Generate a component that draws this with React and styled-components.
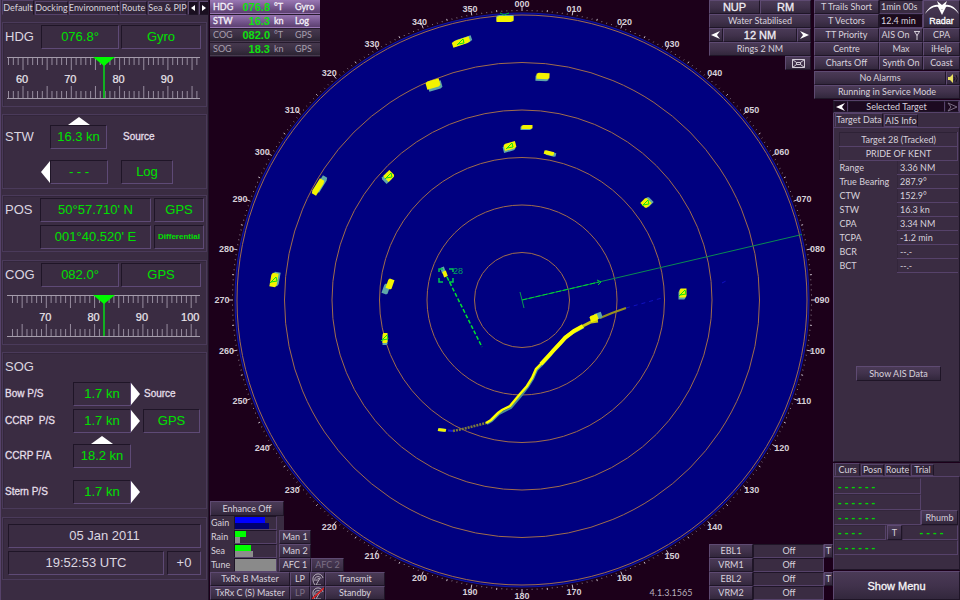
import React from "react";
import styled, { createGlobalStyle, css } from "styled-components";

const C = {
  panel: "#3a2c42",
  edge: "#56426a",
  dark: "#1f1527",
  night: "#1c001a",
  text: "#d8d2dc",
  green: "#00e000",
};

const SMALL = 'Lato, "Liberation Sans", sans-serif';

const Global = createGlobalStyle`
  *, *::before, *::after { box-sizing: border-box; }
  body { margin: 0; background: ${C.night}; color: ${C.text}; font: 10px/12px "Liberation Sans", sans-serif; }
  button { font: inherit; color: inherit; margin: 0; padding: 0; border-radius: 0; cursor: pointer; }
  h2 { margin: 0; font: inherit; }
`;

const Page = styled.div`
  display: grid;
  grid-template-columns: 209px minmax(0, 1fr);
  min-height: 100vh;
`;

/* ---------- shared parts ---------- */

const raised = css`
  border: 1px solid;
  border-color: #5e4a72 ${C.dark} ${C.dark} #5e4a72;
  background: linear-gradient(#4a3a56, #41324c 50%, #32273c);
`;

const Key = styled.button`
  ${raised}
  display: flex;
  align-items: center;
  justify-content: center;
  height: ${(p) => p.$h || "14px"};
  width: ${(p) => p.$w || "auto"};
  flex: ${(p) => (p.$grow ? "1 1 0" : "none")};
  font-family: ${SMALL};
  font-size: 9px;
  line-height: 12px;
  white-space: nowrap;
  color: ${(p) => (p.$dim ? "#7b6f84" : C.text)};
  align-self: ${(p) => p.$self || "auto"};
`;

const BigKey = styled(Key)`
  font-family: "Liberation Sans", sans-serif;
  font-size: 11px;
  color: #f2eef4;
  -webkit-text-stroke: 0.3px #f2eef4;
`;

const Line = styled.div`
  display: flex;
  align-items: center;
  gap: ${(p) => p.$gap || "0"};
  padding: ${(p) => p.$pad || "0"};
`;

const TabBar = styled.div`
  display: flex;
  align-items: flex-end;
  height: ${(p) => p.$h || "15px"};
  gap: 1px;
  padding-left: 1px;
  overflow: hidden;
`;

const Tab = styled.button`
  display: flex;
  align-items: center;
  justify-content: center;
  height: ${(p) => (p.$active ? "100%" : "calc(100% - 1px)")};
  width: ${(p) => p.$w};
  flex: none;
  white-space: nowrap;
  font-family: ${SMALL};
  font-size: 9px;
  line-height: 12px;
  color: ${C.text};
  background: ${(p) => (p.$active ? C.panel : "#33263b")};
  border: 1px solid;
  border-color: ${C.edge} ${C.dark} ${(p) => (p.$active ? C.panel : C.edge)} ${C.edge};
`;

/* ---------- left column ---------- */

const Left = styled.aside`
  background: ${C.panel};
  border-right: 1px solid ${C.dark};
  border-left: 1px solid ${C.edge};
  display: flex;
  flex-direction: column;
`;

const Scroll = styled(Key)`
  background: #1a0f20;
`;

const Group = styled.section`
  border: 1px solid;
  border-color: #4a3a5a;
  box-shadow: inset 1px 1px 0 #33263b;
  margin: ${(p) => p.$mt || "7px"} 1px 0 1px;
  height: ${(p) => p.$h};
  padding: ${(p) => p.$pad || "2px 1px 0 2px"};
`;

const Caption = styled.h2`
  flex: none;
  width: ${(p) => p.$w || "36px"};
  font-size: 13px;
  line-height: 24px;
  color: #dcd6e0;
`;

const Note = styled.span`
  width: ${(p) => p.$w || "auto"};
  font-size: 10px;
  white-space: pre;
  color: #e4dfe8;
  -webkit-text-stroke: 0.3px #e4dfe8;
`;

const Readout = styled.output`
  display: flex;
  align-items: center;
  justify-content: center;
  height: 24px;
  width: ${(p) => p.$w};
  flex: ${(p) => (p.$grow ? "1 1 0" : "none")};
  border: 1px solid;
  border-color: ${C.dark} #5e4a76 #5e4a76 ${C.dark};
  font-size: ${(p) => (p.$small ? "8px" : "13px")};
  font-weight: ${(p) => (p.$small ? "bold" : "normal")};
  color: ${(p) => (p.$plain ? "#dcd6e0" : C.green)};
  white-space: pre;
`;

const Stack = styled.div`
  display: flex;
  flex-direction: column;
  gap: ${(p) => p.$gap || "0"};
  padding: ${(p) => p.$pad || "0"};
`;

const Spacer = styled.div`
  flex: none;
  width: ${(p) => p.$w || "auto"};
  height: ${(p) => p.$h || "auto"};
`;

const Icon = styled.svg`
  display: block;
  flex: none;
`;

const Up = () => (
  <Icon width="22" height="8" viewBox="0 0 22 8"><path d="M0 8L11 0L22 8Z" fill="#fff" /></Icon>
);
const Side = ({ left }) => (
  <Icon width="9" height="22" viewBox="0 0 9 22">
    <path d={left ? "M9 0V22L0 11Z" : "M0 0V22L9 11Z"} fill="#fff" />
  </Icon>
);

const TapeBox = styled.svg`
  display: block;
  width: 100%;
  height: 42px;
  margin-top: 8px;
  padding-left: 2px;
`;

function Tape({ at60, first, labels }) {
  const step = 4.83;
  const ticks = [];
  for (let v = first; v < first + 60; v++) {
    const x = at60 + (v - 60) * step;
    if (x < 1 || x > 193) continue;
    const len = v % 5 === 0 ? 13 : 8;
    ticks.push(<path key={v} d={`M${x} 1V${len}M${x} 41V${42 - len}`} />);
  }
  return (
    <TapeBox viewBox="0 0 198 42" preserveAspectRatio="xMinYMin">
      <path d="M0 .5H193M0 41.5H193" stroke="#a59cab" />
      <g stroke="#978d9f">{ticks}</g>
      <path d="M97 1V41" stroke="#12b022" strokeWidth="2" />
      <path d="M86 0H108L97 9Z" fill="#00fa00" />
      {labels.map((v) => (
        <text key={v} x={at60 + (v - 60) * step - 1} y="26" fontSize="11" textAnchor="middle" fill="#ece8ee" stroke="#ece8ee" strokeWidth=".2">{v}</text>
      ))}
    </TapeBox>
  );
}

function LeftColumn() {
  return (
    <Left>
      <TabBar>
        <Tab $active $w="32px">Default</Tab>
        <Tab $w="33px">Docking</Tab>
        <Tab $w="50px">Environment</Tab>
        <Tab $w="27px">Route</Tab>
        <Tab $w="39px">Sea &amp; PIP</Tab>
        <Scroll $w="10px" aria-label="Previous tabs">
          <Icon width="4" height="6" viewBox="0 0 4 6"><path d="M4 0V6L0 3Z" fill="#fff" /></Icon>
        </Scroll>
        <Scroll $w="10px" aria-label="Next tabs">
          <Icon width="4" height="6" viewBox="0 0 4 6"><path d="M0 0V6L4 3Z" fill="#fff" /></Icon>
        </Scroll>
      </TabBar>

      <Group $h="85px">
        <Line><Caption>HDG</Caption><Readout $w="78px">076.8°</Readout><Spacer $w="2px" /><Readout $w="80px">Gyro</Readout></Line>
        <Tape at60={16} first={55} labels={[60, 70, 80, 90]} />
      </Group>

      <Group $h="75px">
        <Stack $pad="0 0 0 63px"><Up /></Stack>
        <Line><Caption>STW</Caption><Spacer $w="9px" /><Readout $w="57px">16.3 kn</Readout><Spacer $w="16px" /><Note>Source</Note></Line>
        <Line $pad="11px 0 0 36px"><Side left /><Readout $w="58px">- - -</Readout><Spacer $w="13px" /><Readout $w="52px">Log</Readout></Line>
      </Group>

      <Group $h="57px" $mt="6px">
        <Line><Caption $w="35px">POS</Caption><Readout $w="111px">50°57.710' N</Readout><Spacer $w="3px" /><Readout $w="50px">GPS</Readout></Line>
        <Line $pad="3px 0 0 35px"><Readout $w="111px">001°40.520' E</Readout><Spacer $w="3px" /><Readout $w="50px" $small>Differential</Readout></Line>
      </Group>

      <Group $h="85px" $mt="8px">
        <Line><Caption>COG</Caption><Readout $w="78px">082.0°</Readout><Spacer $w="2px" /><Readout $w="80px">GPS</Readout></Line>
        <Tape at60={-9} first={60} labels={[70, 80, 90, 100]} />
      </Group>

      <Group $h="157px">
        <Caption>SOG</Caption>
        <Line $pad="3px 0 0 0"><Note $w="68px">Bow P/S</Note><Readout $w="58px">1.7 kn</Readout><Side /><Spacer $w="4px" /><Note>Source</Note></Line>
        <Line $pad="3px 0 0 0"><Note $w="68px">CCRP  P/S</Note><Readout $w="58px">1.7 kn</Readout><Side /><Spacer $w="3px" /><Readout $w="57px">GPS</Readout></Line>
        <Stack $pad="3px 0 0 86px"><Up /></Stack>
        <Line><Note $w="68px">CCRP F/A</Note><Readout $w="58px">18.2 kn</Readout></Line>
        <Line $pad="12px 0 0 0"><Note $w="68px">Stern P/S</Note><Readout $w="58px">1.7 kn</Readout><Side /></Line>
      </Group>

      <Group $h="63px" $mt="8px" $pad="6px 5px 0 5px">
        <Stack $gap="3px">
          <Line><Readout as="time" $grow $plain>05 Jan 2011</Readout></Line>
          <Line $gap="3px"><Readout as="time" $grow $plain>19:52:53 UTC</Readout><Readout $w="34px" $plain>+0</Readout></Line>
        </Stack>
      </Group>
    </Left>
  );
}

/* ---------- radar picture ---------- */

const Stage = styled.main`
  display: grid;
  grid-template-columns: minmax(0, 1fr) 127px;
  grid-template-rows: auto 1fr;
  background: ${C.night};
`;

const Plot = styled.svg`
  grid-column: 1;
  grid-row: 1 / -1;
  width: 100%;
  height: 100%;
  min-height: 600px;
`;

const polar = (deg, r, ry = r) => {
  const a = (deg * Math.PI) / 180;
  return [Math.sin(a) * r, -Math.cos(a) * ry];
};

/* x, y, width, height, rotation, shadow offset x/y, green mark */
const ECHOES = [
  [-17, -281, 17, 6, 0, 0, -1, 0],
  [-61, -258, 18, 6, -18, 2, -1, 1],
  [-89, -216, 14, 8, -16, 2, 2, 0],
  [-204, -113, 17, 6, -58, 3, -3, 0],
  [-133, -124, 9, 8, -45, -2, 2, 1],
  [21, -224, 13, 6, 2, -1, 2, 0],
  [5, -173, 11, 4, 0, -1, 1, 0],
  [-12, -154, 12, 7, -15, -1, 2, 1],
  [27, -147, 10, 4, 14, 2, 1, 0],
  [124, -97, 8, 8, 45, 2, -1, 1],
  [161, -7, 7, 9, 0, -1, 2, 1],
  [-248, -20, 7, 14, 10, 2, -1, 1],
  [-132, -16, 6, 10, 20, -4, 5, 0],
  [-137, 38, 5, 10, 0, 0, 2, 1],
  [-77, -26, 4, 6, -20, -2, -4, 0],
  [72, 18, 8, 6, -20, 4, -2, 0],
  [-80, 130, 8, 3, 8, 0, 0, 0],
];

function RadarPlot() {
  const small = [], big = [], names = [];
  for (let d = 0; d < 360; d++) {
    const len = d % 10 === 0 ? 294 : d % 5 === 0 ? 291 : 290;
    const [x1, y1] = polar(d, 289);
    const [x2, y2] = polar(d, len);
    (d % 5 === 0 ? big : small).push(`M${x1.toFixed(1)} ${y1.toFixed(1)}L${x2.toFixed(1)} ${y2.toFixed(1)}`);
    if (d % 10 === 0) {
      const [x, y] = polar(d, 300, 296);
      names.push(<text key={d} x={x} y={y + 3}>{String(d).padStart(3, "0")}</text>);
    }
  }
  return (
    <Plot viewBox="-313 -300 624 600" role="img" aria-label="Radar picture">
      <circle r="287" fill="#000080" stroke="#1018a8" strokeWidth="1" />
      <g fill="none" stroke="#a06c4c">
        {[1, 2, 3, 4, 5, 6].map((n) => <circle key={n} r={n * 47.5} />)}
      </g>
      <path d={small.join("")} stroke="#8f8290" />
      <path d={big.join("")} stroke="#c9c0cb" />
      <g fontFamily="Liberation Sans, sans-serif" fontSize="9" fontWeight="bold" fill="#d6cfd8" textAnchor="middle">{names}</g>

      <path d="M0 0L280 -65.500" stroke="#0a8a52" />
      <path d="M0 0L77 -18" stroke="#00d830" strokeDasharray="5 2" />
      <path d="M75 -20L79 -18L76 -15" fill="none" stroke="#00d830" />
      <path d="M-2 -8L2 8" stroke="#0a9a50" />

      <path d="M-74 130.500L-69 131" stroke="#1414d0" strokeWidth="2" />
      <path d="M-69 131L-55 128L-36 123" stroke="#7d7b3c" strokeWidth="2.500" strokeDasharray="2 1" fill="none" />
      <path d="M-36 123L-31 120L-24 113L-12 107L-2 95L5 86L10 78L14 69L19 64L28 54L31 50L38 43L43 37L50 32L61 26" transform="translate(1 1)" stroke="#4b8f93" strokeWidth="2" fill="none" />
      <path d="M-36 123L-31 120L-24 113L-20 110L-12 106L-2 94L5 86L10 78L14 69L19 64L28 54L31 50L38 43L43 37L50 32L61 26" stroke="#ffff00" strokeWidth="2.500" fill="none" />
      <path d="M19 64L31 51L43 38L52 31L61 26" stroke="#ffff00" strokeWidth="4" fill="none" />
      <path d="M61 26L69 22L76 21" stroke="#c8c814" strokeWidth="3" fill="none" />
      <path d="M78 18L90 13L104 8" stroke="#98901c" strokeWidth="2" fill="none" />
      <path d="M104 8L140 -2M200 -17L204 -19" stroke="#1010c0" strokeDasharray="4 4" />

      {ECHOES.map(([x, y, w, h, rot, sx, sy, mark]) => (
        <g key={`${x},${y}`} transform={`translate(${x} ${y})`}>
          <g transform={`translate(${sx} ${sy}) rotate(${rot})`}>
            <path d={`M${-w / 2} ${-h / 3}L${-w / 3} ${-h / 2}H${w / 2}V${h / 3}L${w / 3} ${h / 2}H${-w / 2}Z`} fill="#5fa7a9" />
          </g>
          <g transform={`rotate(${rot})`}>
            <path d={`M${-w / 2} ${-h / 3}L${-w / 3} ${-h / 2}H${w / 2}V${h / 3}L${w / 3} ${h / 2}H${-w / 2}Z`} fill="#f4f400" />
          </g>
          {mark ? <path d="M-4 3L2 -3L3 1L-3 2" fill="none" stroke="#10e010" /> : null}
        </g>
      ))}
      <path d="M-22 -287L-18 -285L-13 -287" stroke="#00c030" fill="none" />

      <path d="M-83 -28V-31H-79M-73 -31H-69V-28M-83 -22V-18H-79M-73 -18H-69V-22" stroke="#00c850" strokeWidth="1.500" fill="none" />
      <text x="-69" y="-26" fontFamily="Liberation Sans, sans-serif" fontSize="9" fill="#00a060">28</text>
      <path d="M-75 -23L-40 47" stroke="#00e030" strokeWidth="1.500" strokeDasharray="4 2" />
    </Plot>
  );
}

/* ---------- header over the picture ---------- */

const Header = styled.header`
  grid-column: 1 / -1;
  grid-row: 1;
  display: flex;
  align-items: flex-start;
  justify-content: space-between;
  z-index: 1;
`;

const Hud = styled.table`
  width: 110px;
  margin-left: 1px;
  border-collapse: collapse;
  table-layout: fixed;
  font: 9px/12px ${SMALL};
`;

const HudRow = styled.tr`
  height: 14px;
  color: ${(p) => (p.$lit ? "#f4f0f8" : "#a79fae")};
  -webkit-text-stroke: ${(p) => (p.$lit ? "0.3px" : "0")};
  background: ${(p) => (p.$lit ? "linear-gradient(#9a78b4, #74558c 60%, #5c4070)" : "linear-gradient(#483a50, #3a2f42 60%, #2c2433)")};
  border-bottom: 1px solid #251a2c;
`;

const HudCell = styled.td`
  padding: 0 0 0 ${(p) => p.$pl || "0"};
  width: ${(p) => p.$w};
  text-align: ${(p) => (p.$value ? "right" : "left")};
  font: ${(p) => (p.$value ? 'bold 11px/12px "Liberation Sans", sans-serif' : "inherit")};
  color: ${(p) => (p.$value ? "#10e010" : "inherit")};
  -webkit-text-stroke: ${(p) => (p.$value ? "0" : "inherit")};
`;

const HUD = [
  ["HDG", "076.8", "°T", "Gyro", true],
  ["STW", "16.3", "kn", "Log", true],
  ["COG", "082.0", "°T", "GPS", false],
  ["SOG", "18.3", "kn", "GPS", false],
];

const TopRight = styled.div`
  display: flex;
  align-items: flex-start;
  gap: 3px;
`;

const RangeBox = styled.div`
  width: 102px;
  display: flex;
  flex-direction: column;
`;

const Functions = styled.div`
  width: 146px;
  display: grid;
  grid-template-columns: 65px 44px 37px;
`;

const Wide = styled.div`
  grid-column: 1 / -1;
  display: flex;
  margin-top: ${(p) => p.$mt || "0"};
`;

const Field = styled(Key)`
  justify-content: ${(p) => (p.$center ? "center" : "flex-start")};
  padding-left: 1px;
  background: ${(p) => (p.$black ? "#1c0a1c" : C.panel)};
  border-color: ${C.dark} ${C.edge} ${C.edge} ${C.dark};
`;

const Brand = styled(Key)`
  grid-column: 3;
  grid-row: 1 / 3;
  flex-direction: column;
  color: #fff;
  -webkit-text-stroke: 0.3px #fff;
  font-family: "Liberation Sans", sans-serif;
`;

const Chevron = ({ flip, dim }) => (
  <Icon width="10" height="10" viewBox="0 0 10 10">
    <path d={flip ? "M9 1L0 5L9 9L6 5Z" : "M1 1L10 5L1 9L4 5Z"} fill={dim ? "none" : "#fff"} stroke={dim ? "#7b6f84" : "none"} />
  </Icon>
);

function TopBar() {
  return (
    <Header>
      <Hud>
        <tbody>
          {HUD.map(([name, value, unit, source, lit]) => (
            <HudRow key={name} $lit={lit}>
              <HudCell $pl="3px" $w="27px">{name}</HudCell>
              <HudCell $value $w="33px">{value}</HudCell>
              <HudCell $pl="4px" $w="25px">{unit}</HudCell>
              <HudCell $w="25px">{source}</HudCell>
            </HudRow>
          ))}
        </tbody>
      </Hud>
      <TopRight>
        <RangeBox>
          <Line><BigKey $grow>NUP</BigKey><BigKey $grow>RM</BigKey></Line>
          <Key>Water Stabilised</Key>
          <Line>
            <Key $w="14px" aria-label="Range down"><Chevron flip /></Key>
            <BigKey $grow>12 NM</BigKey>
            <Key $w="14px" aria-label="Range up"><Chevron /></Key>
          </Line>
          <Key>Rings 2 NM</Key>
          <Key $w="26px" $self="flex-end" aria-label="Messages">
            <Icon width="13" height="9" viewBox="0 0 13 9">
              <path d="M.5 .5H12.500V8.500H.5ZM.5 .5L4.500 3.500H8.500L12.500 .5M.5 8.500L4.500 5.500H8.500L12.500 8.500M4.500 3.500V5.500M8.500 3.500V5.500" fill="none" stroke="#d2ccd6" />
            </Icon>
          </Key>
        </RangeBox>
        <Functions>
          <Key>T Trails Short</Key><Field>1min 00s</Field>
          <Brand $h="28px">
            <Icon width="34" height="14" viewBox="0 0 34 14">
              <path d="M0 13C3 7 8 3 14 4L17 9L20 4C26 3 31 7 34 13C30 8 25 5 21 6L17 14L13 6C9 5 4 8 0 13Z" fill="#fff" />
              <path d="M12 0L17 4L22 0L19 8H15Z" fill="#fff" />
            </Icon>
            Radar
          </Brand>
          <Key>T Vectors</Key><Field $black>12.4 min</Field>
          <Key>TT Priority</Key>
          <Key>
            AIS On<Spacer $w="5px" />
            <Icon width="6" height="9" viewBox="0 0 6 9"><path d="M0 .5H6M.5 .5L3 4.500L5.500 .5M3 4V9" fill="none" stroke="#d2ccd6" /></Icon>
          </Key>
          <Key>CPA</Key>
          <Key>Centre</Key><Key>Max</Key><Key>iHelp</Key>
          <Key>Charts Off</Key><Key>Synth On</Key><Key>Coast</Key>
          <Wide $mt="1px">
            <Key $grow>No Alarms</Key>
            <Key $w="14px" aria-label="Silence alarm">
              <Icon width="10" height="9" viewBox="0 0 10 9">
                <path d="M0 3H2L5 0V9L2 6H0Z" fill="#e8e060" />
                <path d="M6 3Q7.500 4.500 6 6.500M8 1Q10.500 4.500 8 8" fill="none" stroke="#1a1020" />
              </Icon>
            </Key>
          </Wide>
          <Wide><Key $grow>Running in Service Mode</Key></Wide>
        </Functions>
      </TopRight>
    </Header>
  );
}

/* ---------- right column ---------- */

const Right = styled.aside`
  grid-column: 2;
  grid-row: 2;
  display: flex;
  flex-direction: column;
  padding-top: 1px;
`;

const Selector = styled.div`
  display: grid;
  grid-template-columns: 14px 1fr 14px;
  height: 13px;
  border: 1px solid ${C.edge};
  border-left-color: ${C.dark};
`;

const SelectorPart = styled(Key)`
  height: 11px;
  background: #1c0a20;
  border-color: ${C.dark} ${C.edge} ${C.dark} ${C.dark};
`;

const Card = styled.section`
  background: ${C.panel};
  border-left: 1px solid ${C.edge};
  border-bottom: 1px solid ${C.dark};
  display: flex;
  flex-direction: column;
  flex: ${(p) => (p.$grow ? "1 0 auto" : "none")};
  margin-bottom: 1px;
`;

const CardBody = styled.div`
  border-top: 1px solid ${C.edge};
  border-right: 1px solid ${C.dark};
  display: flex;
  flex-direction: column;
  padding: ${(p) => p.$pad || "0"};
  height: ${(p) => p.$h || "auto"};
  flex: ${(p) => (p.$h ? "none" : "1")};
`;

const Target = styled.table`
  border-collapse: collapse;
  table-layout: fixed;
  width: 100%;
  font: 9px/12px ${SMALL};
  tr { height: 14px; }
  th, td { padding: 0; font-weight: normal; text-align: left; }
  td { border-bottom: 1px solid ${C.edge}; border-left: 1px solid #33263b; padding-left: 2px; }
  th[colspan] { text-align: center; border: 1px solid; border-color: #2e2236 ${C.edge} ${C.edge} #2e2236; }
`;
const NameCol = styled.col`
  width: 58px;
`;

const ROWS = [
  ["Range", "3.36 NM"], ["True Bearing", "287.9°"], ["CTW", "152.9°"], ["STW", "16.3 kn"],
  ["CPA", "3.34 NM"], ["TCPA", "-1.2 min"], ["BCR", "--.-"], ["BCT", "--.-"],
];

const Curs = styled.output`
  display: flex;
  align-items: center;
  justify-content: ${(p) => (p.$center ? "center" : "flex-start")};
  height: ${(p) => p.$h || "15px"};
  padding-left: 3px;
  width: ${(p) => p.$w || "auto"};
  flex: ${(p) => (p.$w ? "none" : "1")};
  border: 1px solid;
  border-color: #33263b ${C.edge} ${C.edge} #33263b;
  font-size: 11px;
  font-weight: bold;
  line-height: 13px;
  white-space: pre;
  color: #00d800;
`;

const Menu = styled(BigKey)`
  font-size: 11px;
  color: #fff;
`;

function RightColumn() {
  return (
    <Right>
      <Selector>
        <SelectorPart aria-label="Previous target"><Chevron flip /></SelectorPart>
        <SelectorPart>Selected Target</SelectorPart>
        <SelectorPart aria-label="Next target"><Chevron dim /></SelectorPart>
      </Selector>
      <Card $grow>
        <TabBar $h="14px"><Tab $active $w="48px">Target Data</Tab><Tab $w="34px">AIS Info</Tab></TabBar>
        <CardBody $pad="4px 1px 0 5px">
          <Target>
            <colgroup><NameCol /><col /></colgroup>
            <tbody>
              <tr><th colSpan={2}>Target 28 (Tracked)</th></tr>
              <tr><th colSpan={2}>PRIDE OF KENT</th></tr>
              {ROWS.map(([k, v]) => <tr key={k}><th scope="row">{k}</th><td>{v}</td></tr>)}
            </tbody>
          </Target>
          <Spacer $h="93px" />
          <Key $w="85px" $h="15px" $self="center">Show AIS Data</Key>
        </CardBody>
      </Card>
      <Card>
        <TabBar $h="13px"><Tab $active $w="25px">Curs</Tab><Tab $w="23px">Posn</Tab><Tab $w="25px">Route</Tab><Tab $w="23px">Trial</Tab></TabBar>
        <CardBody $h="93px" $pad="1px 1px 0 0">
          <Line><Curs $w="87px" $h="16px">- - - - - -</Curs></Line>
          <Line><Curs $w="87px" $h="16px">- - - - - -</Curs></Line>
          <Line><Curs $w="87px">- - - - - -</Curs><Key $grow $h="15px">Rhumb</Key></Line>
          <Line><Curs $w="52px">- - - -</Curs><Spacer $w="1px" /><Key $w="15px" $h="15px">T</Key><Curs $center>- - - -</Curs></Line>
          <Line><Curs>- - - - - -</Curs></Line>
        </CardBody>
      </Card>
      <Menu $h="29px">Show Menu</Menu>
    </Right>
  );
}

/* ---------- footer over the picture ---------- */

const Footer = styled.footer`
  grid-column: 1;
  grid-row: 2;
  align-self: end;
  display: flex;
  align-items: flex-end;
  padding-left: 1px;
  z-index: 1;
`;

const Controls = styled.div`
  display: flex;
  flex-direction: column;
  width: 175px;
`;

const Level = styled.div`
  display: flex;
  align-items: center;
  width: ${(p) => p.$w || "69px"};
  height: 14px;
  padding-left: 1px;
  background: ${C.panel};
  font: 9px/12px ${SMALL};
`;

const LevelName = styled.span`
  width: 23px;
`;

const Meter = styled.div`
  width: 43px;
  height: 14px;
  border: 1px solid;
  border-color: ${C.dark} ${C.edge} ${C.edge} ${C.dark};
  display: flex;
  flex-direction: column;
`;

const Bar = styled.div`
  width: ${(p) => p.$w};
  background: ${(p) => p.$c};
  flex: 1;
`;

const Version = styled.p`
  margin: 0 auto 1px auto;
  padding-left: 248px;
  font: 9px/12px ${SMALL};
  color: #b9b0bd;
`;

const Lines = styled.div`
  display: grid;
  grid-template-columns: 44px 71px 9px;
`;

const Scanner = ({ off }) => (
  <Icon width="12" height="12" viewBox="0 0 12 12">
    <path d="M1 7A5 5 0 0 1 11 5M3 8A3.200 3.200 0 0 1 9 5.500M5 8A1.500 1.500 0 0 1 8 6.500M3 12Q1 9.500 1 7M8 5L4 12H9" fill="none" stroke="#b3abb9" />
    {off ? <path d="M0 12L12 1" stroke="#e02020" strokeWidth="1.500" /> : null}
  </Icon>
);

function BottomBar() {
  return (
    <Footer>
      <Controls>
        <Key $w="74px" $h="15px">Enhance Off</Key>
        <Level $w="74px"><LevelName>Gain</LevelName><Meter><Bar $w="73%" $c="#0000ff" /><Bar $w="82%" $c="#000070" /></Meter></Level>
        <Line>
          <Level><LevelName>Rain</LevelName><Meter><Bar $w="26%" $c="#00ff00" /><Bar $w="13%" $c="#8c8c8c" /></Meter></Level>
          <Key $w="32px">Man 1</Key>
        </Line>
        <Line>
          <Level><LevelName>Sea</LevelName><Meter><Bar $w="38%" $c="#00ff00" /><Bar $w="44%" $c="#8c8c8c" /></Meter></Level>
          <Key $w="32px">Man 2</Key>
        </Line>
        <Line>
          <Level><LevelName>Tune</LevelName><Meter><Bar $w="100%" $c="#8a8a8a" /></Meter></Level>
          <Key $w="32px">AFC 1</Key><Key $w="33px" $dim>AFC 2</Key>
        </Line>
        <Line>
          <Key $w="80px">TxRx B Master</Key><Key $w="20px">LP</Key><Key $w="15px" aria-label="Scanner B"><Scanner /></Key><Key $grow>Transmit</Key>
        </Line>
        <Line>
          <Key $w="80px">TxRx C (S) Master</Key><Key $w="20px" $dim>LP</Key><Key $w="15px" aria-label="Scanner C"><Scanner off /></Key><Key $grow>Standby</Key>
        </Line>
      </Controls>
      <Version>4.1.3.1565</Version>
      <Lines>
        <Key>EBL1</Key><Field $center>Off</Field><Key>T</Key>
        <Key>VRM1</Key><Field $center>Off</Field><Spacer />
        <Key>EBL2</Key><Field $center>Off</Field><Key>T</Key>
        <Key>VRM2</Key><Field $center>Off</Field><Spacer />
      </Lines>
    </Footer>
  );
}

export default function App() {
  return (
    <>
      <Global />
      <Page>
        <LeftColumn />
        <Stage>
          <RadarPlot />
          <TopBar />
          <RightColumn />
          <BottomBar />
        </Stage>
      </Page>
    </>
  );
}
